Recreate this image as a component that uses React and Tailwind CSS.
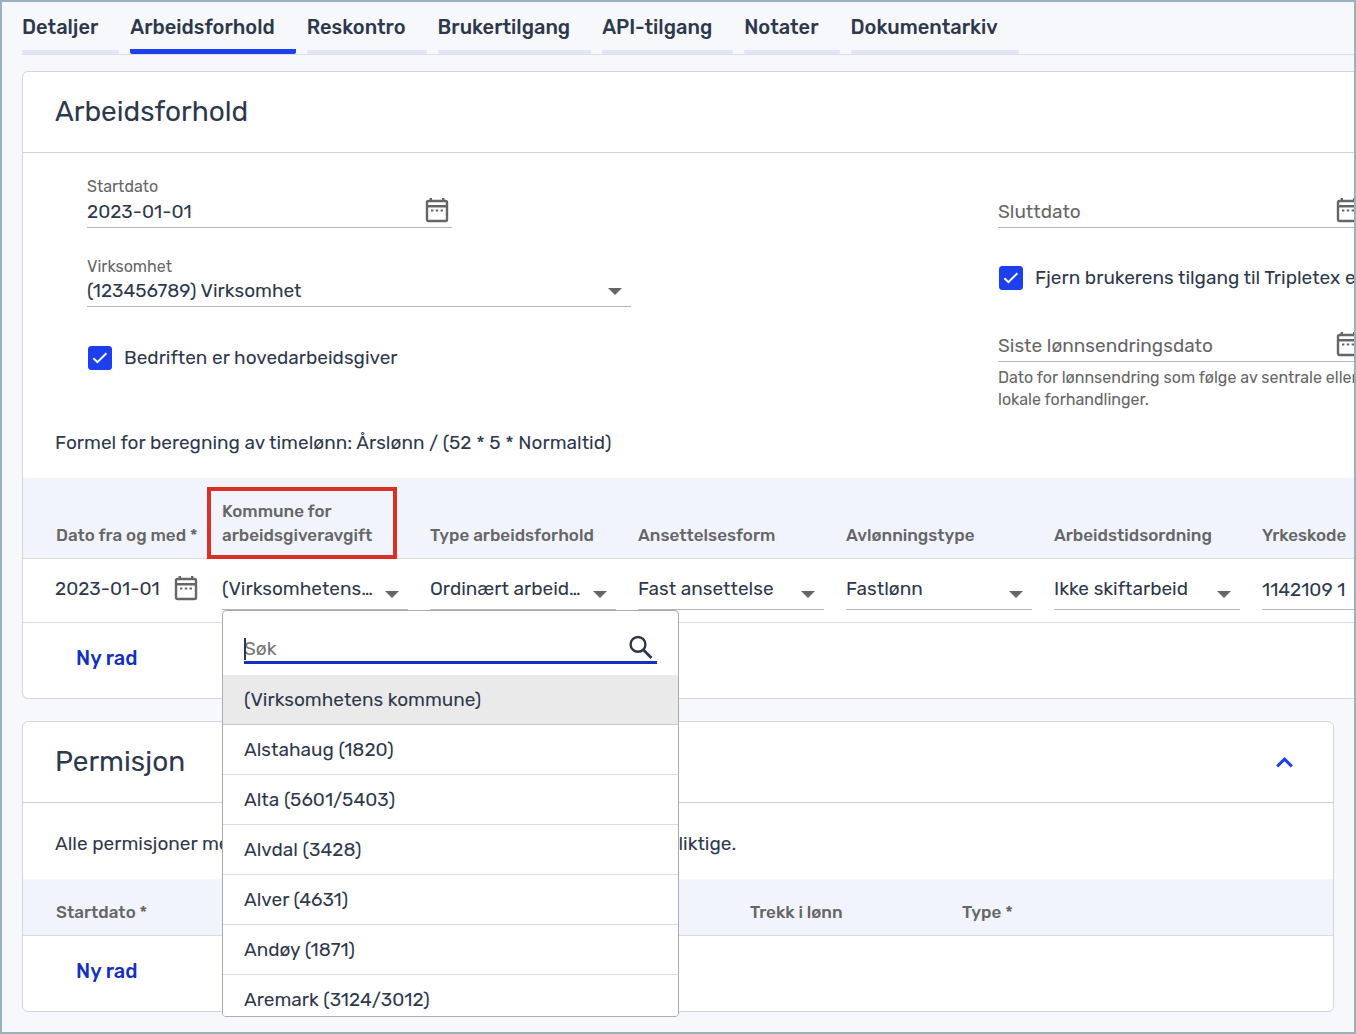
import React from "react";

const TABS = ["Detaljer", "Arbeidsforhold", "Reskontro", "Brukertilgang", "API-tilgang", "Notater", "Dokumentarkiv"];

const MUNICIPALITIES = [
  "(Virksomhetens kommune)",
  "Alstahaug (1820)",
  "Alta (5601/5403)",
  "Alvdal (3428)",
  "Alver (4631)",
  "Andøy (1871)",
  "Aremark (3124/3012)",
];

function CalendarIcon() {
  return (
    <svg viewBox="0 0 24 26" className="h-[26px] w-6" fill="none" aria-hidden="true">
      <rect x="2" y="4" width="20" height="20" rx="1.5" stroke="#666" strokeWidth="2.4" />
      <path d="M2 9.2h20M5.8 1v3M18.2 1v3" stroke="#666" strokeWidth="2.4" />
      <path d="M6 12.4h2.4v2.2H6zM10.8 12.4h2.4v2.2h-2.4zM15.6 12.4H18v2.2h-2.4z" fill="#666" />
    </svg>
  );
}

function Caret() {
  return (
    <svg viewBox="0 0 14 7" className="h-[7px] w-[14px]" aria-hidden="true">
      <path d="M0 0h14L7 7z" fill="#666" />
    </svg>
  );
}

function DateField({ id, label, value, floating }) {
  return (
    <div className="w-[365px]">
      {floating ? (
        <label htmlFor={id} className="block h-5 text-base leading-[22px] text-[#666]">{label}</label>
      ) : (
        <div className="h-5" />
      )}
      <div className="flex h-8 items-center border-b border-[#b5b5b5]">
        <input
          id={id}
          type="text"
          aria-label={label}
          defaultValue={value}
          placeholder={floating ? undefined : label}
          className="min-w-0 flex-1 bg-transparent outline-none placeholder:text-[#666]"
        />
        <button type="button" aria-label={"Velg " + label} className="mr-[3px] mb-[3px]">
          <CalendarIcon />
        </button>
      </div>
    </div>
  );
}

function Checkbox({ id, label }) {
  return (
    <div className="ml-px flex h-6 items-center gap-3">
      <span className="relative size-6 shrink-0">
        <input id={id} type="checkbox" defaultChecked className="peer size-6 appearance-none rounded-[3px] border border-[#666] checked:border-[#1c3ff0] checked:bg-[#1c3ff0]" />
        <svg viewBox="0 0 24 24" className="pointer-events-none absolute inset-0 hidden size-6 peer-checked:block" fill="none" aria-hidden="true">
          <path d="M5.4 12.2l4 4L18.4 7.2" stroke="#fff" strokeWidth="2" />
        </svg>
      </span>
      <label htmlFor={id} className="whitespace-nowrap">{label}</label>
    </div>
  );
}

function CellSelect({ label, value }) {
  return (
    <div className="relative mr-[22px]">
      <select aria-label={label} className="h-[41px] w-full appearance-none truncate border-b border-[#b5b5b5] bg-transparent pr-8 outline-none">
        <option>{value}</option>
      </select>
      <span className="pointer-events-none absolute top-[22px] right-[9px]">
        <Caret />
      </span>
    </div>
  );
}

function MunicipalityMenu() {
  return (
    <div className="absolute top-[51px] left-0 z-10 h-[407px] w-[457px] overflow-hidden rounded border border-[#a9acb5] bg-white">
      <div className="px-[21px] pt-[21px] pb-[11px]">
        <div className="relative flex h-8 items-center border-b-[3px] border-[#1530c0]">
          <span className="absolute top-1.5 left-0 h-[22px] w-0.5 bg-[#2e384d]" />
          <input type="search" aria-label="Søk" placeholder="Søk" className="min-w-0 flex-1 bg-transparent pt-1 outline-none placeholder:text-[#757575]" />
          <svg viewBox="0 0 26 26" className="mr-[3px] size-[26px]" fill="none" stroke="#2e384d" aria-hidden="true">
            <circle cx="10" cy="10.4" r="7.4" strokeWidth="2.4" />
            <path d="M15.3 15.7l8.2 8.2" strokeWidth="2.8" />
          </svg>
        </div>
      </div>
      <ul role="listbox" aria-label="Kommune">
        {MUNICIPALITIES.map((name, i) => (
          <li key={name} role="option" aria-selected={i === 0}>
            <button
              type="button"
              className={
                "flex h-[50px] w-full items-center border-b px-[21px] text-left " +
                (i === 0 ? "border-[#c8c8c8] bg-[#eaeaea]" : "border-[#dcdcdf] bg-white")
              }
            >
              {name}
            </button>
          </li>
        ))}
      </ul>
    </div>
  );
}

function NewRow() {
  return (
    <div className="pt-[23px] pb-7 pl-[53px]">
      <button type="button" className="block text-xl leading-6 font-medium text-[#1530c0]">Ny rad</button>
    </div>
  );
}

const TH = "pb-[11px] text-left align-bottom text-[17px] leading-6 font-medium text-[#666]";

export default function App() {
  return (
    <div className="min-h-screen overflow-hidden border-2 border-[#9bb1be] bg-[#f7f8fc] px-5 pb-5 font-['Rubik','Inter',sans-serif] text-[19px] leading-6 text-[#2e384d]">
      <nav className="-mr-5 flex gap-[11px] border-b border-[#dcdde0]">
        {TABS.map((tab, i) => (
          <a
            key={tab}
            href="#"
            aria-current={i === 1 ? "page" : undefined}
            className={
              "h-[52px] rounded-xs pt-3 pr-[21px] text-xl leading-[26px] font-medium whitespace-nowrap " +
              (i === 1 ? "border-b-[5px] border-[#1c3ff0]" : "border-b-4 border-[#e0e5fa]")
            }
          >
            {tab}
          </a>
        ))}
      </nav>

      <section className="mt-4 w-max min-w-full rounded-md border border-[#d3d5da] bg-white">
        <header className="flex h-[81px] items-center border-b border-[#cfd0d3] px-8">
          <h2 className="text-[28px] leading-8">Arbeidsforhold</h2>
        </header>
        <div className="grid grid-cols-[911px_1fr] pt-[23px] pl-16">
          <div>
            <DateField id="start" label="Startdato" value="2023-01-01" floating />
            <div className="mt-7 w-[544px]">
              <label htmlFor="company" className="block h-5 text-base leading-[22px] text-[#666]">Virksomhet</label>
              <div className="relative">
                <select id="company" className="h-[31px] w-full appearance-none border-b border-[#b5b5b5] bg-transparent pr-10 outline-none">
                  <option>(123456789) Virksomhet</option>
                </select>
                <span className="pointer-events-none absolute top-3 right-[9px]">
                  <Caret />
                </span>
              </div>
            </div>
            <div className="mt-[39px]">
              <Checkbox id="main-employer" label="Bedriften er hovedarbeidsgiver" />
            </div>
          </div>
          <div>
            <DateField id="end" label="Sluttdato" />
            <div className="mt-[38px] mb-5">
              <Checkbox id="remove-access" label="Fjern brukerens tilgang til Tripletex etter sluttdato" />
            </div>
            <DateField id="last-change" label="Siste lønnsendringsdato" />
            <p className="mt-[5px] w-[388px] text-base leading-[22px] text-[#666]">
              Dato for lønnsendring som følge av sentrale eller lokale forhandlinger.
            </p>
          </div>
        </div>
        <p className="mt-5 px-8 pb-[23px]">Formel for beregning av timelønn: Årslønn / (52 * 5 * Normaltid)</p>
        <table className="w-[1863px] table-fixed border-separate border-spacing-0">
          <colgroup>
            <col className="w-[199px]" />
            <col className="w-[208px]" />
            <col className="w-[208px]" />
            <col className="w-[208px]" />
            <col className="w-[208px]" />
            <col className="w-[208px]" />
            <col />
          </colgroup>
          <thead className="bg-[#f1f4fd] [&_th]:border-b [&_th]:border-[#d9dbe0]">
            <tr className="h-[81px]">
              <th className={TH + " pl-[33px]"}>Dato fra og med *</th>
              <th className={TH + " relative"}>
                Kommune for
                <br />
                arbeidsgiveravgift
                <span className="absolute top-[9px] -left-[15px] h-[72px] w-[190px] border-4 border-[#d93025]" />
              </th>
              <th className={TH}>Type arbeidsforhold</th>
              <th className={TH}>Ansettelsesform</th>
              <th className={TH}>Avlønningstype</th>
              <th className={TH}>Arbeidstidsordning</th>
              <th className={TH}>Yrkeskode</th>
            </tr>
          </thead>
          <tbody className="[&_td]:border-b [&_td]:border-[#dcdde0] [&_td]:pt-2.5 [&_td]:align-top">
            <tr className="h-16">
              <td className="pl-8">
                <div className="flex h-10 items-center">
                  <input type="text" aria-label="Dato fra og med" defaultValue="2023-01-01" className="w-[119px] bg-transparent outline-none" />
                  <button type="button" aria-label="Velg dato" className="mb-[3px]">
                    <CalendarIcon />
                  </button>
                </div>
              </td>
              <td className="relative">
                <CellSelect label="Kommune for arbeidsgiveravgift" value="(Virksomhetens kommune)" />
                <MunicipalityMenu />
              </td>
              <td><CellSelect label="Type arbeidsforhold" value="Ordinært arbeidsforhold" /></td>
              <td><CellSelect label="Ansettelsesform" value="Fast ansettelse" /></td>
              <td><CellSelect label="Avlønningstype" value="Fastlønn" /></td>
              <td><CellSelect label="Arbeidstidsordning" value="Ikke skiftarbeid" /></td>
              <td>
                <input type="text" aria-label="Yrkeskode" defaultValue="1142109 1" className="h-[41px] w-[186px] border-b border-[#b5b5b5] bg-transparent outline-none" />
              </td>
            </tr>
          </tbody>
        </table>
        <NewRow />
      </section>

      <section className="mt-[22px] rounded-md border border-[#d3d5da] bg-white">
        <header className="flex h-[81px] items-center justify-between border-b border-[#cfd0d3] px-8">
          <h2 className="text-[28px] leading-8">Permisjon</h2>
          <button type="button" aria-label="Skjul permisjon" className="p-2">
            <svg viewBox="0 0 17 11" className="h-[11px] w-[17px]" fill="none" aria-hidden="true">
              <path d="M1.2 9.3L8.5 2.2l7.3 7.1" stroke="#1c3ff0" strokeWidth="3" />
            </svg>
          </button>
        </header>
        <p className="px-8 pt-[29px] pb-[23px]">
          Alle permisjoner med en varighet på minst 30 dager blir rapporteringspliktige.
        </p>
        <table className="w-full table-fixed border-separate border-spacing-0">
          <colgroup>
            <col className="w-[727px]" />
            <col className="w-[212px]" />
            <col />
          </colgroup>
          <thead className="bg-[#f1f4fd] [&_th]:border-b [&_th]:border-[#d9dbe0]">
            <tr className="h-[57px]">
              <th className={TH + " pl-[33px]"}>Startdato *</th>
              <th className={TH}>Trekk i lønn</th>
              <th className={TH}>Type *</th>
            </tr>
          </thead>
        </table>
        <NewRow />
      </section>
    </div>
  );
}
